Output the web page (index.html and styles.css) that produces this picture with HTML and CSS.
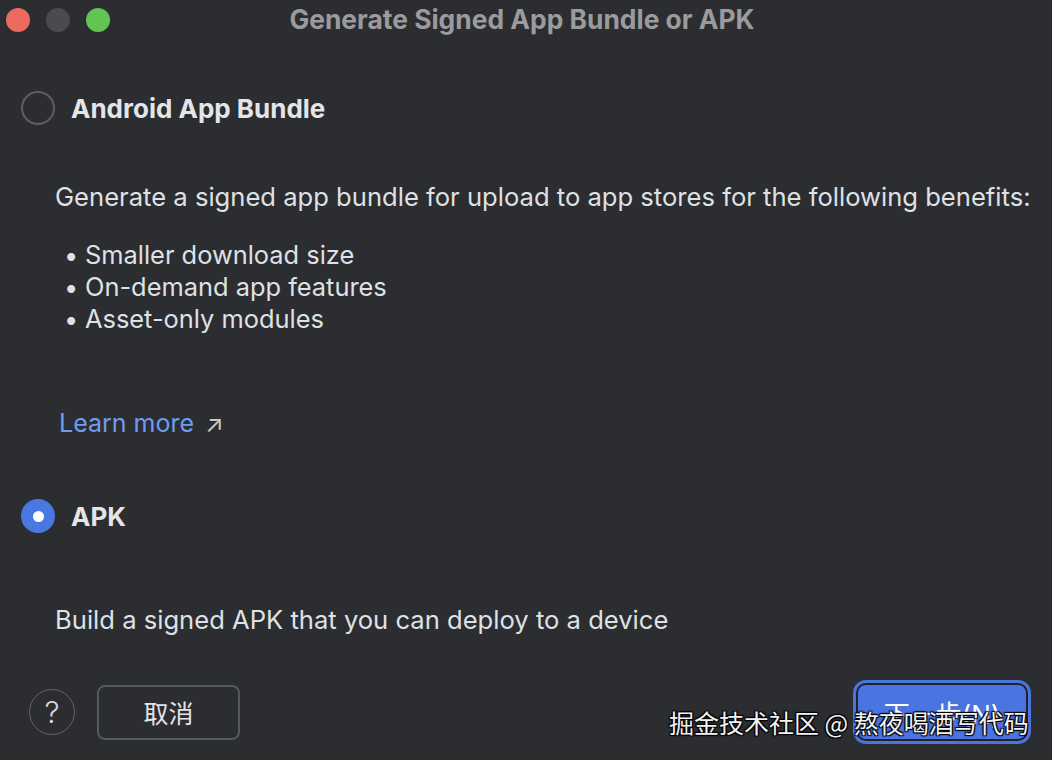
FILE: index.html
```html
<!DOCTYPE html>
<html lang="zh">
<head>
<meta charset="utf-8">
<title>Generate Signed App Bundle or APK</title>
<link rel="stylesheet" href="styles.css">
</head>
<body>
<div class="window">
  <header class="titlebar">
    <div class="lights">
      <span class="light red"></span>
      <span class="light gray"></span>
      <span class="light green"></span>
    </div>
    <div class="title">Generate Signed App Bundle or APK</div>
  </header>

  <main class="content">
    <section class="option">
      <div class="opt-head">
        <span class="radio"></span>
        <span class="opt-label">Android App Bundle</span>
      </div>
      <div class="opt-body">
        <p class="desc">Generate a signed app bundle for upload to app stores for the following benefits:</p>
        <ul class="benefits">
          <li>Smaller download size</li>
          <li>On-demand app features</li>
          <li>Asset-only modules</li>
        </ul>
        <a class="learn">Learn more <span class="arrow">↗</span></a>
      </div>
    </section>

    <section class="option apk">
      <div class="opt-head">
        <span class="radio checked"></span>
        <span class="opt-label">APK</span>
      </div>
      <div class="opt-body">
        <p class="desc">Build a signed APK that you can deploy to a device</p>
      </div>
    </section>
  </main>

  <footer class="footer">
    <div class="left">
      <span class="help">?</span>
      <span class="btn cancel">取消</span>
    </div>
    <span class="btn next">下一步(N)</span>
  </footer>
  <div class="watermark">掘金技术社区 @ 熬夜喝酒写代码</div>
</div>
</body>
</html>
```

FILE: styles.css
```css
html, body {
  margin: 0;
  padding: 0;
  background: #2b2d30;
}
body {
  font-family: Inter, "Noto Sans", "Noto Sans CJK SC", sans-serif;
  color: #dfe1e5;
}
.window {
  position: relative;
  width: 1052px;
  height: 760px;
  background: #2b2d30;
  overflow: hidden;
}
.titlebar {
  height: 40px;
  display: flex;
  align-items: center;
  position: relative;
}
.lights {
  display: flex;
  gap: 16px;
  padding-left: 6px;
}
.light {
  width: 24px;
  height: 24px;
  border-radius: 50%;
  display: block;
}
.light.red { background: #ec6a5e; }
.light.gray { background: #4a4b4e; }
.light.green { background: #61c554; }
.title {
  position: absolute;
  left: 0;
  right: 0;
  top: 0;
  height: 40px;
  line-height: 38px;
  text-align: center;
  font-weight: 700;
  font-size: 26.4px;
  color: #9b9b9d;
  padding-right: 8px;
}
.content {
  padding-left: 21px;
}
.option { margin-top: 50px; }
.opt-head {
  display: flex;
  align-items: center;
  gap: 16px;
  height: 36px;
}
.radio {
  width: 34px;
  height: 34px;
  border: 2px solid #5c5e63;
  border-radius: 50%;
  box-sizing: border-box;
  display: flex;
  align-items: center;
  justify-content: center;
}
.radio.checked {
  background: #4a78e2;
  border-color: #4a78e2;
}
.radio.checked::after {
  content: "";
  width: 11px;
  height: 11px;
  border-radius: 50%;
  background: #fff;
}
.opt-label {
  font-weight: 700;
  font-size: 26px;
  color: #e4e5e8;
}
.opt-body {
  padding-left: 34px;
}
.desc {
  margin: 0;
  font-size: 25.6px;
  line-height: 32px;
}
.option:first-child .desc { margin-top: 55px; }
.benefits {
  list-style: none;
  margin: 26px 0 0 0;
  padding: 0 0 0 9px;
  font-size: 25.4px;
  line-height: 32px;
}
.benefits li::before {
  content: "•";
  display: inline-block;
  width: 21px;
}
.learn {
  display: inline-block;
  margin-top: 72px;
  margin-left: 4px;
  font-size: 25px;
  line-height: 32px;
  color: #6f9cf0;
}
.learn .arrow {
  color: #c9cbcf;
  font-size: 24px;
  margin-left: 4px;
}
.option.apk { margin-top: 58px; }
.option.apk .desc { margin-top: 70px; }
.footer {
  position: absolute;
  left: 0;
  right: 0;
  top: 680px;
  height: 64px;
  display: flex;
  justify-content: space-between;
  align-items: center;
  padding: 0 21px 0 29px;
}
.left {
  display: flex;
  align-items: center;
  gap: 22px;
}
.help {
  width: 46px;
  height: 46px;
  box-sizing: border-box;
  border: 1.5px solid #5f6166;
  border-radius: 50%;
  display: flex;
  align-items: center;
  justify-content: center;
  font-size: 30px;
  font-weight: 300;
  color: #d4d6da;
}
.btn {
  display: flex;
  align-items: center;
  justify-content: center;
  box-sizing: border-box;
  font-size: 25px;
}
.cancel {
  width: 143px;
  height: 55px;
  border: 2px solid #55585d;
  border-radius: 8px;
  color: #e3e4e7;
}
.next {
  border: 2px solid #222326;
  border-radius: 10px;
  background: #4a74e0;
  box-shadow: 0 0 0 3px #4a74e0;
  color: #fff;
  margin-right: 3px;
  width: 172px;
  height: 58px;
  font-size: 26px;
}
.watermark {
  position: absolute;
  left: 669px;
  top: 704px;
  font-size: 25px;
  line-height: 36px;
  color: #f2f2f2;
  text-shadow: 1px 1px 1px #000, -1px -1px 1px #000, 1px -1px 1px #000, -1px 1px 1px #000;
  font-family: "Noto Sans CJK SC", sans-serif;
  white-space: nowrap;
}
```
